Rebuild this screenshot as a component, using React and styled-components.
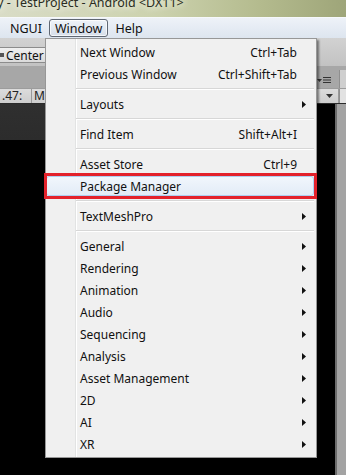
import React from 'react'
import styled, { createGlobalStyle } from 'styled-components'

const GlobalStyle = createGlobalStyle`
  html, body {
    margin: 0;
    padding: 0;
    background: #000;
  }
  body {
    font-family: "Noto Sans", "Open Sans", sans-serif;
    font-size: 12px;
    color: #111;
  }
`

const Screen = styled.div`
  position: relative;
  width: 346px;
  height: 475px;
  overflow: hidden;
  display: flex;
  flex-direction: column;
  background: #000;
`

const TitleBar = styled.div`
  height: 17px;
  display: flex;
  align-items: flex-end;
  background: linear-gradient(to right, #d9dcc6 0%, #ccd2ae 45%, #b4bb8e 75%, #9ea579 100%);
  overflow: hidden;
`

const TitleText = styled.div`
  margin-left: -3px;
  padding-bottom: 7px;
  font-size: 12.5px;
  line-height: 14px;
  color: #2a2d22;
  white-space: nowrap;
  text-shadow: 0 0 6px #f4f5ea, 0 0 10px #f4f5ea;
`

const MenuBar = styled.div`
  height: 21px;
  display: flex;
  align-items: center;
  padding-left: 4px;
  gap: 1px;
  background: linear-gradient(#eef2f8, #dde5ef);
  border-top: 1px solid #f6f8fb;
  box-sizing: border-box;
`

const MenuBarItem = styled.div`
  height: 16px;
  display: flex;
  align-items: center;
  padding: 0 5px;
  border: 1px solid ${p => (p.$open ? '#5f6773' : 'transparent')};
  border-radius: 3px;
  background: ${p => (p.$open ? 'linear-gradient(#eef3f9, #d6dee9)' : 'transparent')};
  box-shadow: ${p => (p.$open ? 'inset 0 0 0 1px rgba(255,255,255,0.7)' : 'none')};
  font-size: 12.5px;
  color: #111;
`

const Editor = styled.div`
  flex: 1;
  display: flex;
  flex-direction: column;
`

const MainToolbar = styled.div`
  height: 28px;
  box-sizing: border-box;
  padding-top: 9px;
  display: flex;
  align-items: flex-start;
  background: linear-gradient(#d2d2d2, #c2c2c2);
`

const PivotButton = styled.div`
  height: 16px;
  width: 60px;
  box-sizing: border-box;
  display: flex;
  align-items: center;
  gap: 2px;
  margin-left: -2px;
  padding-left: 1px;
  border: 1px solid #8c8c8c;
  border-radius: 2px;
  background: linear-gradient(#f0f0f0, #dadada);
  font-size: 12px;
  color: #111;
`

const PivotIcon = styled.span`
  width: 4px;
  height: 4px;
  background: #555;
`

const TabStrip = styled.div`
  height: 22px;
  display: flex;
  justify-content: flex-end;
  align-items: flex-end;
  background: #a7a7a7;
`

const PanelMenu = styled.div`
  height: 16px;
  display: flex;
  align-items: center;
  padding-right: 8px;
`

const PanelTab = styled.div`
  width: 6px;
  height: 18px;
  background: #cfcfcf;
  border-left: 1px solid #8f8f8f;
`

const SceneToolbar = styled.div`
  height: 16px;
  box-sizing: border-box;
  display: flex;
  align-items: stretch;
  background: linear-gradient(#dcdcdc, #cdcdcd);
  border-top: 1px solid #9c9c9c;
  border-bottom: 1px solid #2a2a2a;
`

const ToolField = styled.div`
  width: ${p => p.$w}px;
  display: flex;
  align-items: center;
  justify-content: ${p => (p.$center ? 'center' : 'flex-start')};
  padding-left: ${p => (p.$center ? 0 : 2)}px;
  border-right: 1px solid #999;
  font-size: 12px;
  line-height: 12px;
  color: #222;
  overflow: hidden;
  white-space: nowrap;
`

const ToolSpacer = styled.div`
  flex: 1;
`

const ToolTail = styled.div`
  width: 6px;
  background: #e2e2e2;
  border-left: 1px solid #8f8f8f;
`

const SceneArea = styled.div`
  flex: 1;
  display: flex;
`

const LeftDock = styled.div`
  width: 60px;
  background: linear-gradient(#2f2f2f 0, #2c2c2c 36px, #000 36px);
`

const Viewport = styled.div`
  flex: 1;
  background: #000;
`

const SideStrip = styled.div`
  width: 9px;
  background: #a3a3a3;
  border-left: 2px solid #6c6c6c;
`

const Menu = styled.div`
  position: absolute;
  left: 45px;
  top: 38px;
  width: 272px;
  box-sizing: border-box;
  padding: 2px 0;
  border: 1px solid #979797;
  background-color: #f0f0f0;
  background-image: linear-gradient(
    to right,
    transparent 29px,
    #e2e3e3 29px,
    #e2e3e3 30px,
    #ffffff 30px,
    #ffffff 31px,
    transparent 31px
  );
  box-shadow: 2px 2px 2px rgba(0, 0, 0, 0.45);
`

const Item = styled.div`
  position: relative;
  height: 22px;
  display: flex;
  align-items: center;
  padding: 0 9px 0 34px;
  font-size: 12px;
  color: #111;
  white-space: nowrap;
`

const Highlight = styled.div`
  position: absolute;
  left: 0;
  right: 2px;
  top: 1px;
  bottom: 1px;
  border: 1px solid #aecff0;
  border-radius: 3px;
  background: linear-gradient(#f1f6fc, #e2ecf7);
`

const Label = styled.span`
  position: relative;
  flex: 1;
`

const Shortcut = styled.span`
  position: relative;
`

const ArrowSlot = styled.span`
  position: relative;
  width: 10px;
  display: flex;
  align-items: center;
  justify-content: flex-end;
  padding-right: 1px;
  box-sizing: border-box;
`

const Separator = styled.div`
  height: 8px;
  margin: 0 2px 0 30px;
  display: flex;
  flex-direction: column;
  justify-content: center;
  &::before {
    content: '';
    height: 1px;
    background: #d7d7d7;
  }
  &::after {
    content: '';
    height: 1px;
    background: #ffffff;
  }
`

const Annotation = styled.div`
  position: absolute;
  left: -2px;
  right: -1px;
  top: -2px;
  bottom: -2px;
  border: 3px solid #e3222b;
  pointer-events: none;
`

const Arrow = () => (
  <svg width="4" height="7" viewBox="0 0 4 7">
    <polygon points="0,0 4,3.5 0,7" fill="#111" />
  </svg>
)

const Caret = () => (
  <svg width="7" height="4" viewBox="0 0 7 4">
    <polygon points="0,0 7,0 3.5,4" fill="#333" />
  </svg>
)

const MenuLines = () => (
  <svg width="14" height="6" viewBox="0 0 14 6">
    <polygon points="0,2 5,2 2.5,5" fill="#333" />
    <rect x="6" y="0" width="8" height="1" fill="#333" />
    <rect x="6" y="2.5" width="8" height="1" fill="#333" />
    <rect x="6" y="5" width="8" height="1" fill="#333" />
  </svg>
)

const SEP = 'sep'
const entries = [
  { label: 'Next Window', shortcut: 'Ctrl+Tab' },
  { label: 'Previous Window', shortcut: 'Ctrl+Shift+Tab' },
  SEP,
  { label: 'Layouts', sub: true },
  SEP,
  { label: 'Find Item', shortcut: 'Shift+Alt+I' },
  SEP,
  { label: 'Asset Store', shortcut: 'Ctrl+9' },
  { label: 'Package Manager', active: true },
  SEP,
  { label: 'TextMeshPro', sub: true },
  SEP,
  { label: 'General', sub: true },
  { label: 'Rendering', sub: true },
  { label: 'Animation', sub: true },
  { label: 'Audio', sub: true },
  { label: 'Sequencing', sub: true },
  { label: 'Analysis', sub: true },
  { label: 'Asset Management', sub: true },
  { label: '2D', sub: true },
  { label: 'AI', sub: true },
  { label: 'XR', sub: true },
]

const App = () => (
  <Screen>
    <GlobalStyle />
    <TitleBar>
      <TitleText>y - TestProject - Android &lt;DX11&gt;</TitleText>
    </TitleBar>
    <MenuBar>
      <MenuBarItem>NGUI</MenuBarItem>
      <MenuBarItem $open>Window</MenuBarItem>
      <MenuBarItem>Help</MenuBarItem>
    </MenuBar>
    <Editor>
      <MainToolbar>
        <PivotButton>
          <PivotIcon />
          Center
        </PivotButton>
      </MainToolbar>
      <TabStrip>
        <PanelMenu>
          <MenuLines />
        </PanelMenu>
        <PanelTab />
      </TabStrip>
      <SceneToolbar>
        <ToolField $w={29}>.47:</ToolField>
        <ToolField $w={40}>Ma</ToolField>
        <ToolSpacer />
        <ToolField $w={17} $center>
          <Caret />
        </ToolField>
        <ToolTail />
      </SceneToolbar>
      <SceneArea>
        <LeftDock />
        <Viewport />
        <SideStrip />
      </SceneArea>
    </Editor>

    <Menu>
      {entries.map((e, i) =>
        e === SEP ? (
          <Separator key={i} />
        ) : (
          <Item key={i}>
            {e.active && <Highlight />}
            <Label>{e.label}</Label>
            {e.shortcut && <Shortcut>{e.shortcut}</Shortcut>}
            <ArrowSlot>{e.sub && <Arrow />}</ArrowSlot>
            {e.active && <Annotation />}
          </Item>
        )
      )}
    </Menu>
  </Screen>
)

export default App
